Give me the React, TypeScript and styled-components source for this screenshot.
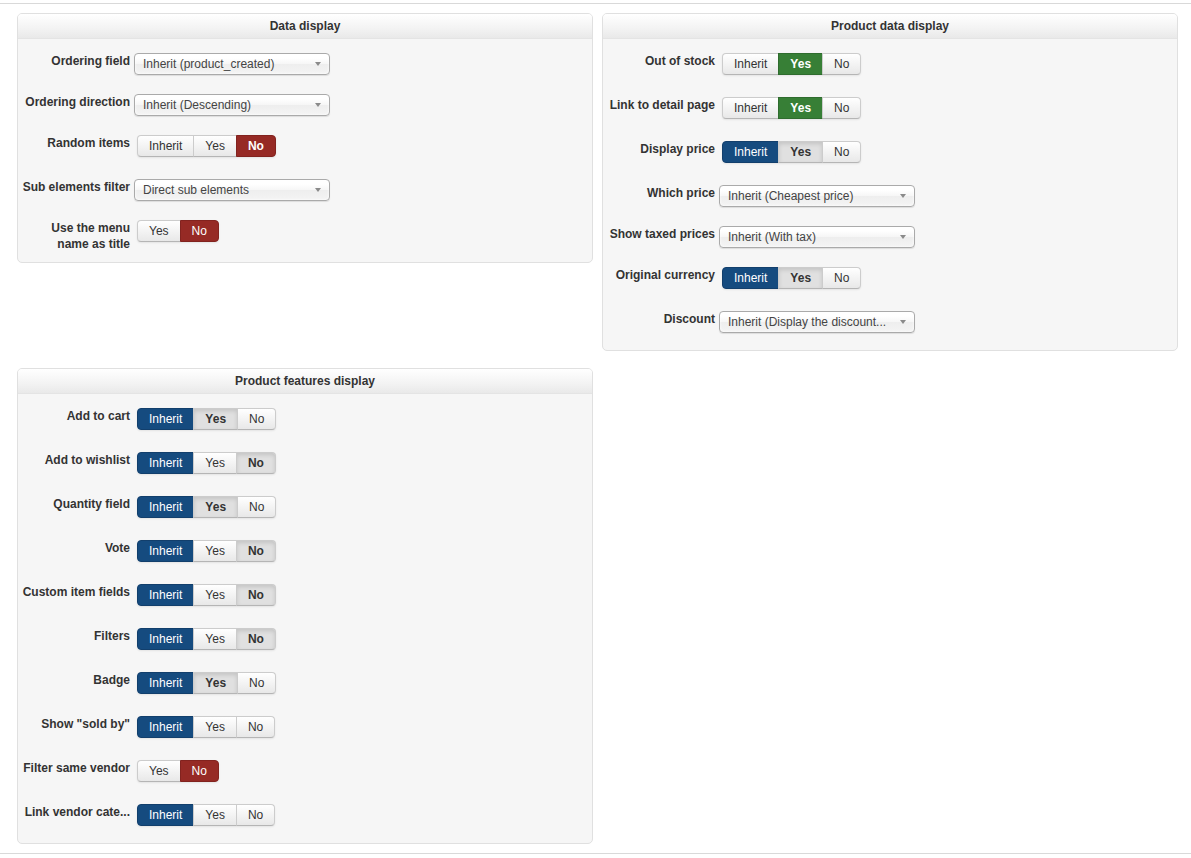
import React from 'react';
import styled, { createGlobalStyle, css } from 'styled-components';

type Tone = 'off' | 'blue' | 'green' | 'red' | 'gray';

interface ToggleOption {
  text: string;
  tone?: Tone;
  bold?: boolean;
}

type FieldRow =
  | { label: string; kind: 'select'; value: string; wrap?: boolean }
  | { label: string; kind: 'toggle'; options: ToggleOption[]; wrap?: boolean };

interface PanelData {
  title: string;
  rows: FieldRow[];
}

const GlobalStyle = createGlobalStyle`
  html, body {
    margin: 0;
    padding: 0;
    background: #ffffff;
  }
  body {
    font-family: 'Liberation Sans', Arial, sans-serif;
    font-size: 12px;
    color: #333333;
  }
`;

const Page = styled.div`
  margin-top: 3px;
  border-top: 1px solid #d9d9d9;
  border-bottom: 1px solid #d9d9d9;
  padding: 9px 0 9px 17px;
`;

const Grid = styled.div`
  display: grid;
  grid-template-columns: 576px 576px;
  column-gap: 9px;
  row-gap: 17px;
  align-items: start;
`;

const Panel = styled.section`
  background: #f6f6f6;
  border: 1px solid #e0e0e0;
  border-radius: 5px;
  overflow: hidden;
`;

const PanelHeader = styled.div`
  height: 24px;
  line-height: 24px;
  border-bottom: 1px solid #e4e4e4;
  background: linear-gradient(to bottom, #ffffff 0%, #f3f3f3 60%, #e9e9e9 100%);
  text-align: center;
  font-weight: bold;
  font-size: 12px;
  color: #333;
`;

const PanelBody = styled.div<{ $extra?: number }>`
  padding: 14px 4px ${(p) => 17 + (p.$extra ?? 0)}px 4px;
`;

const Row = styled.div<{ $gap: number }>`
  display: flex;
  align-items: flex-start;
  height: 22px;
  margin-bottom: ${(p) => p.$gap}px;

  &:last-child {
    margin-bottom: 0;
  }
`;

const Label = styled.label<{ $wrap?: boolean }>`
  flex: 0 0 108px;
  width: 108px;
  margin-right: 4px;
  text-align: right;
  font-weight: bold;
  font-size: 12px;
  line-height: 16px;
  color: #333;
  white-space: ${(p) => (p.$wrap ? 'normal' : 'nowrap')};
`;

const SelectBox = styled.div`
  position: relative;
  box-sizing: border-box;
  width: 196px;
  height: 22px;
  line-height: 21px;
  padding: 0 20px 0 8px;
  border: 1px solid #aaaaaa;
  border-radius: 4px;
  background: linear-gradient(to bottom, #ffffff 20%, #f6f6f6 50%, #eeeeee 52%, #f4f4f4 100%);
  box-shadow: 0 0 3px #ffffff inset, 0 1px 1px rgba(0, 0, 0, 0.1);
  color: #444;
  font-size: 12px;
  white-space: nowrap;
`;

const Arrow = styled.span`
  position: absolute;
  right: 8px;
  top: 8px;
  width: 0;
  height: 0;
  border-left: 3px solid transparent;
  border-right: 3px solid transparent;
  border-top: 4px solid #8a8a8a;
`;

const ButtonGroup = styled.div`
  display: flex;
  margin-left: 3px;
  border-radius: 4px;
  box-shadow: 0 1px 2px rgba(0, 0, 0, 0.08);
`;

const toneStyles: Record<Tone, ReturnType<typeof css>> = {
  off: css`
    background: linear-gradient(to bottom, #ffffff, #e8e8e8);
    color: #333;
  `,
  gray: css`
    background: #e0e0e0;
    color: #333;
    box-shadow: inset 0 2px 4px rgba(0, 0, 0, 0.13);
  `,
  blue: css`
    background: #154b7f;
    border-color: #123f6c;
    color: #ffffff;
  `,
  green: css`
    background: #377f36;
    border-color: #2f6c2e;
    color: #ffffff;
  `,
  red: css`
    background: #962a25;
    border-color: #82231f;
    color: #ffffff;
  `,
};

const ToggleButton = styled.span<{ $tone: Tone; $bold?: boolean }>`
  box-sizing: border-box;
  height: 22px;
  line-height: 20px;
  padding: 0 11px;
  border: 1px solid #cccccc;
  border-bottom-color: #b5b5b5;
  font-size: 12px;
  font-weight: ${(p) => (p.$bold ? 'bold' : 'normal')};
  cursor: pointer;
  ${(p) => toneStyles[p.$tone]}

  & + & {
    margin-left: -1px;
  }
  &:first-child {
    border-radius: 4px 0 0 4px;
  }
  &:last-child {
    border-radius: 0 4px 4px 0;
  }
`;

const inheritYesNo = (active: Tone, grayIndex: number | null): ToggleOption[] =>
  ['Inherit', 'Yes', 'No'].map((text, i) => ({
    text,
    tone: i === 0 ? active : i === grayIndex ? 'gray' : 'off',
    bold: i === grayIndex,
  }));

const dataDisplay: PanelData = {
  title: 'Data display',
  rows: [
    { label: 'Ordering field', kind: 'select', value: 'Inherit (product_created)' },
    { label: 'Ordering direction', kind: 'select', value: 'Inherit (Descending)' },
    {
      label: 'Random items',
      kind: 'toggle',
      options: [{ text: 'Inherit' }, { text: 'Yes' }, { text: 'No', tone: 'red', bold: true }],
    },
    { label: 'Sub elements filter', kind: 'select', value: 'Direct sub elements' },
    {
      label: 'Use the menu name as title',
      kind: 'toggle',
      wrap: true,
      options: [{ text: 'Yes' }, { text: 'No', tone: 'red' }],
    },
  ],
};

const productDataDisplay: PanelData = {
  title: 'Product data display',
  rows: [
    {
      label: 'Out of stock',
      kind: 'toggle',
      options: [{ text: 'Inherit' }, { text: 'Yes', tone: 'green', bold: true }, { text: 'No' }],
    },
    {
      label: 'Link to detail page',
      kind: 'toggle',
      options: [{ text: 'Inherit' }, { text: 'Yes', tone: 'green', bold: true }, { text: 'No' }],
    },
    { label: 'Display price', kind: 'toggle', options: inheritYesNo('blue', 1) },
    { label: 'Which price', kind: 'select', value: 'Inherit (Cheapest price)' },
    { label: 'Show taxed prices', kind: 'select', value: 'Inherit (With tax)' },
    { label: 'Original currency', kind: 'toggle', options: inheritYesNo('blue', 1) },
    { label: 'Discount', kind: 'select', value: 'Inherit (Display the discount...' },
  ],
};

const productFeatures: PanelData = {
  title: 'Product features display',
  rows: [
    { label: 'Add to cart', kind: 'toggle', options: inheritYesNo('blue', 1) },
    { label: 'Add to wishlist', kind: 'toggle', options: inheritYesNo('blue', 2) },
    { label: 'Quantity field', kind: 'toggle', options: inheritYesNo('blue', 1) },
    { label: 'Vote', kind: 'toggle', options: inheritYesNo('blue', 2) },
    { label: 'Custom item fields', kind: 'toggle', options: inheritYesNo('blue', 2) },
    { label: 'Filters', kind: 'toggle', options: inheritYesNo('blue', 2) },
    { label: 'Badge', kind: 'toggle', options: inheritYesNo('blue', 1) },
    { label: 'Show "sold by"', kind: 'toggle', options: inheritYesNo('blue', null) },
    {
      label: 'Filter same vendor',
      kind: 'toggle',
      options: [{ text: 'Yes' }, { text: 'No', tone: 'red' }],
    },
    { label: 'Link vendor cate...', kind: 'toggle', options: inheritYesNo('blue', null) },
  ],
};

const SettingsPanel: React.FC<{ data: PanelData; extra?: number }> = ({ data, extra }) => (
  <Panel>
    <PanelHeader>{data.title}</PanelHeader>
    <PanelBody $extra={extra}>
      {data.rows.map((row) => (
        <Row key={row.label} $gap={row.kind === 'select' ? 19 : 22}>
          <Label $wrap={row.wrap}>{row.label}</Label>
          {row.kind === 'select' ? (
            <SelectBox>
              {row.value}
              <Arrow />
            </SelectBox>
          ) : (
            <ButtonGroup>
              {row.options.map((opt) => (
                <ToggleButton key={opt.text} $tone={opt.tone ?? 'off'} $bold={opt.bold}>
                  {opt.text}
                </ToggleButton>
              ))}
            </ButtonGroup>
          )}
        </Row>
      ))}
    </PanelBody>
  </Panel>
);

const App: React.FC = () => (
  <>
    <GlobalStyle />
    <Page>
      <Grid>
        <SettingsPanel data={dataDisplay} extra={3} />
        <SettingsPanel data={productDataDisplay} />
        <SettingsPanel data={productFeatures} />
      </Grid>
    </Page>
  </>
);

export default App;
